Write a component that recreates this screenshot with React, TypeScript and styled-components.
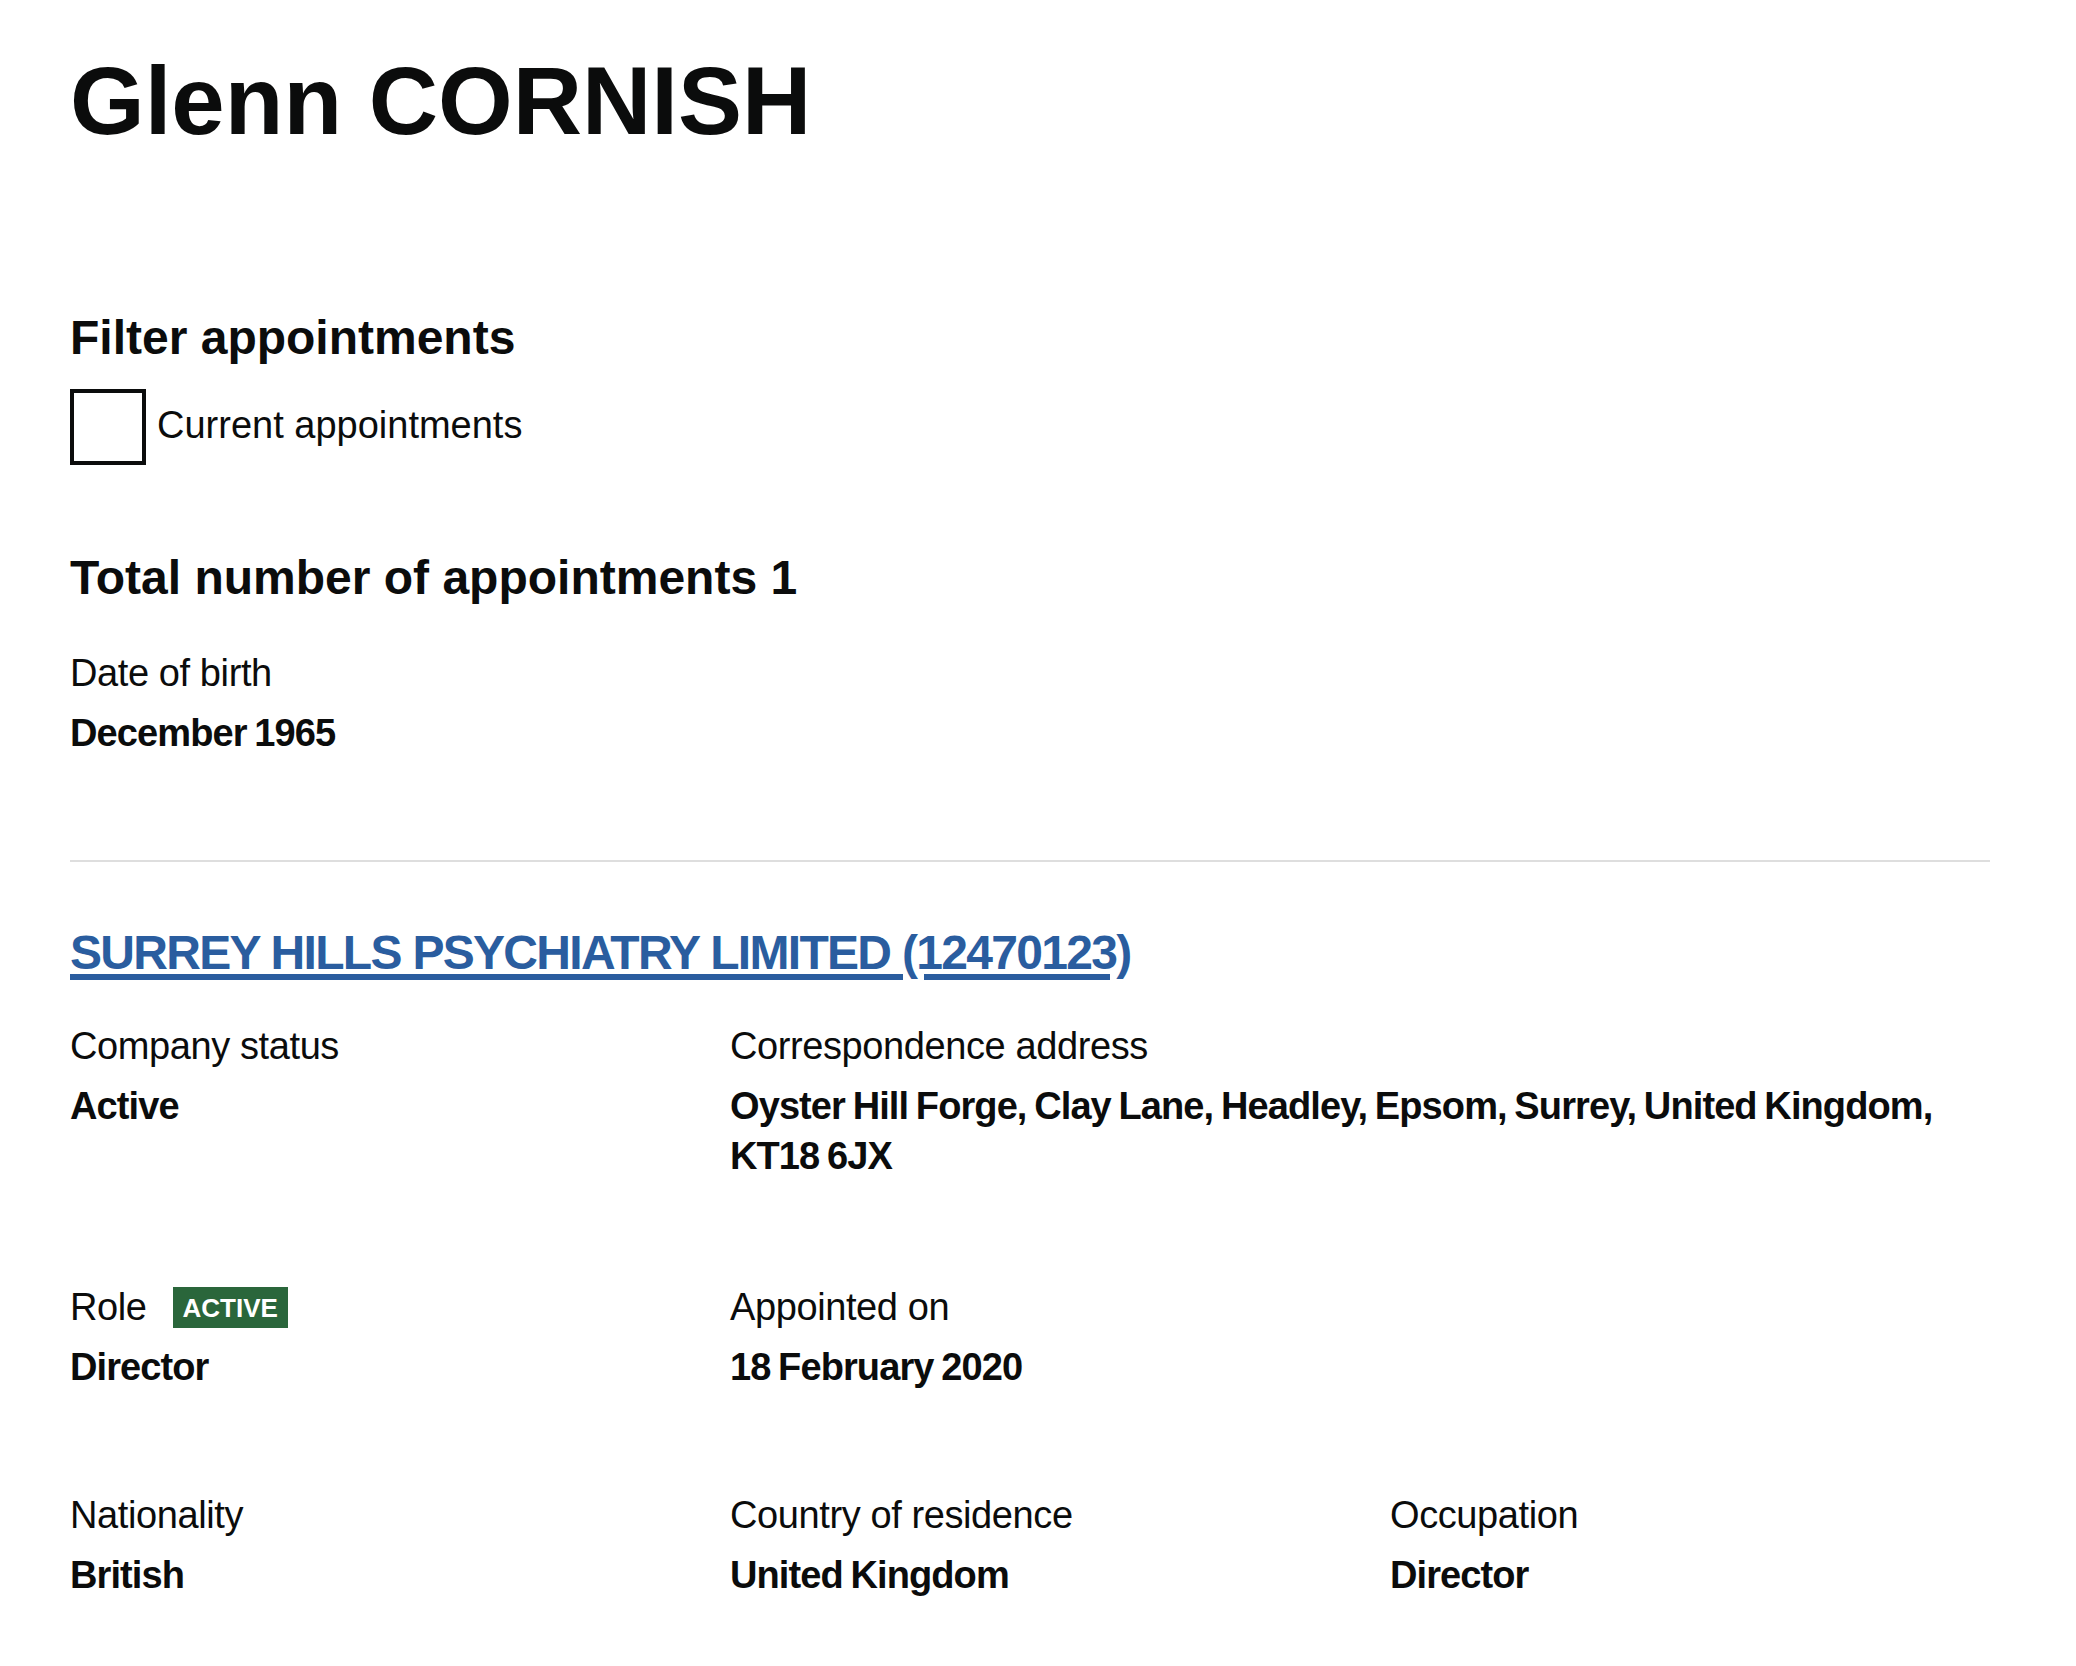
import React from 'react'
import styled, { createGlobalStyle } from 'styled-components'

const GlobalStyle = createGlobalStyle`
  html, body {
    margin: 0;
    padding: 0;
    background: #ffffff;
  }
  body {
    font-family: 'Liberation Sans', Arial, sans-serif;
    color: #0b0c0c;
  }
`

const Page = styled.main`
  width: 1920px;
  padding: 51px 86px 70px 70px;
`

const Title = styled.h1`
  margin: 0 0 157px;
  font-size: 96px;
  line-height: 100px;
  font-weight: 700;
`

const Heading = styled.h2<{ $gap: number }>`
  margin: 0 0 ${(p) => p.$gap}px;
  font-size: 48px;
  line-height: 60px;
  font-weight: 700;
`

const CheckRow = styled.label`
  display: flex;
  align-items: center;
  gap: 11px;
  margin-bottom: 83px;
  cursor: pointer;
`

const CheckBox = styled.span`
  display: block;
  width: 76px;
  height: 76px;
  box-sizing: border-box;
  border: 4px solid #0b0c0c;
  background: #ffffff;
`

const CheckLabel = styled.span`
  font-size: 38px;
  line-height: 50px;
  letter-spacing: 0;
  padding-bottom: 4px;
`

const Item = styled.dl<{ $gap?: number }>`
  margin: 0 0 ${(p) => p.$gap ?? 0}px;
`

const Label = styled.dt`
  display: flex;
  align-items: center;
  height: 50px;
  font-size: 38px;
  line-height: 50px;
  letter-spacing: -0.4px;
`

const Value = styled.dd`
  margin: 10px 0 0;
  font-size: 38px;
  line-height: 50px;
  font-weight: 700;
  letter-spacing: -0.9px;
  word-spacing: -2px;
`

const Tag = styled.strong`
  display: inline-block;
  margin-left: 26px;
  padding: 8px 10px 7px;
  background: #2a663b;
  color: #ffffff;
  font-size: 26px;
  line-height: 26px;
  font-weight: 700;
  letter-spacing: 0;
  text-transform: uppercase;
`

const Divider = styled.hr`
  margin: 0 0 61px;
  border: 0;
  border-top: 2px solid #dedede;
`

const CompanyHeading = styled(Heading)`
  letter-spacing: -1.7px;
`

const CompanyLink = styled.a`
  color: #2a5d9f;
  text-decoration: underline;
  text-decoration-thickness: 6px;
  text-underline-offset: 5px;
`

const Row = styled.div<{ $gap: number }>`
  display: flex;
  margin: 0 -30px ${(p) => p.$gap}px;
`

const Column = styled.div<{ $span: 1 | 2 }>`
  box-sizing: border-box;
  width: ${(p) => (p.$span === 2 ? '66.6667%' : '33.3333%')};
  padding: 0 30px;
`

const App = () => {
  return (
    <>
      <GlobalStyle />
      <Page>
        <Title>Glenn CORNISH</Title>

        <Heading $gap={21}>Filter appointments</Heading>
        <CheckRow>
          <CheckBox />
          <CheckLabel>Current appointments</CheckLabel>
        </CheckRow>

        <Heading $gap={40}>Total number of appointments 1</Heading>
        <Item $gap={102}>
          <Label>Date of birth</Label>
          <Value>December 1965</Value>
        </Item>

        <Divider />

        <CompanyHeading $gap={38}>
          <CompanyLink href="#">SURREY HILLS PSYCHIATRY LIMITED (12470123)</CompanyLink>
        </CompanyHeading>

        <Row $gap={101}>
          <Column $span={1}>
            <Item>
              <Label>Company status</Label>
              <Value>Active</Value>
            </Item>
          </Column>
          <Column $span={2}>
            <Item>
              <Label>Correspondence address</Label>
              <Value>Oyster Hill Forge, Clay Lane, Headley, Epsom, Surrey, United Kingdom, KT18 6JX</Value>
            </Item>
          </Column>
        </Row>

        <Row $gap={98}>
          <Column $span={1}>
            <Item>
              <Label>
                Role <Tag>Active</Tag>
              </Label>
              <Value>Director</Value>
            </Item>
          </Column>
          <Column $span={1}>
            <Item>
              <Label>Appointed on</Label>
              <Value>18 February 2020</Value>
            </Item>
          </Column>
        </Row>

        <Row $gap={0}>
          <Column $span={1}>
            <Item>
              <Label>Nationality</Label>
              <Value>British</Value>
            </Item>
          </Column>
          <Column $span={1}>
            <Item>
              <Label>Country of residence</Label>
              <Value>United Kingdom</Value>
            </Item>
          </Column>
          <Column $span={1}>
            <Item>
              <Label>Occupation</Label>
              <Value>Director</Value>
            </Item>
          </Column>
        </Row>
      </Page>
    </>
  )
}

export default App
